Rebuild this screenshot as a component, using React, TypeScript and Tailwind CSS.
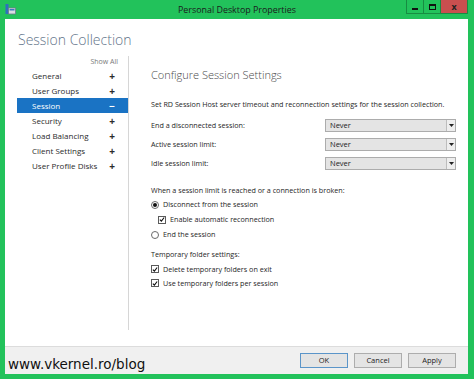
import React from 'react';

const navItems = ['General', 'User Groups', 'Session', 'Security', 'Load Balancing', 'Client Settings', 'User Profile Disks'];

const limits = ['End a disconnected session:', 'Active session limit:', 'Idle session limit:'];

const Check = () => (
  <span className="w-[8px] h-[8px] border border-[#5a5a5a] bg-white flex items-center justify-center shrink-0">
    <svg width="7" height="7" viewBox="0 0 7 7">
      <path d="M1 3.6 L2.8 5.4 L6 1.2" fill="none" stroke="#111" strokeWidth="1.3" />
    </svg>
  </span>
);

const Radio = ({ on }: { on?: boolean }) => (
  <span className="w-[8px] h-[8px] rounded-full border border-[#6a6a6a] bg-white flex items-center justify-center shrink-0">
    {on && <span className="w-[4px] h-[4px] rounded-full bg-[#111]" />}
  </span>
);

const Dropdown = () => (
  <div className="w-[131px] h-[13px] border border-[#acacac] bg-[#e4e4e4] flex">
    <span className="flex-1 pl-[4px] text-[7.5px] leading-[11px] text-[#222]">Never</span>
    <span className="w-[9px] border-l border-[#bdbdbd] bg-[#eeeeee] flex items-center justify-center">
      <svg width="5" height="3" viewBox="0 0 5 3">
        <path d="M0 0 L5 0 L2.5 3 Z" fill="#222" />
      </svg>
    </span>
  </div>
);

export default function App() {
  return (
    <div className="w-[474px] h-[379px] bg-[#22c25b] flex flex-col overflow-hidden" style={{ fontFamily: '"Open Sans", "Noto Sans", sans-serif' }}>
      {/* Title bar */}
      <div className="h-[19px] grid grid-cols-[1fr_auto_1fr] shrink-0">
        <div className="pl-[5px] pt-[4px]">
          <svg width="11" height="11" viewBox="0 0 11 11">
            <rect x="0.5" y="0" width="3" height="10" fill="#2f6fbf" />
            <rect x="3.5" y="4" width="7" height="6" fill="#d9dde3" stroke="#6b7b8c" strokeWidth="0.8" />
            <rect x="4.5" y="5" width="5" height="1.5" fill="#3a78c4" />
          </svg>
        </div>
        <div className="text-[8.9px] leading-[19px] text-[#1b1b1b]">Personal Desktop Properties</div>
        <div className="flex justify-end pr-[6px]">
          <div className="flex h-[14px] border border-t-0 border-[#178c42]">
            <div className="w-[17px] border-r border-[#178c42] flex items-end justify-center pb-[3px]">
              <span className="w-[6px] h-[2px] bg-[#111]" />
            </div>
            <div className="w-[17px] border-r border-[#178c42] flex items-center justify-center">
              <span className="w-[7px] h-[6px] border border-[#111] border-t-2" />
            </div>
            <div className="w-[26px] bg-[#c94f4f] flex items-center justify-center text-[9px] font-bold leading-none text-[#222]">x</div>
          </div>
        </div>
      </div>

      {/* Window body */}
      <div className="flex-1 ml-[5px] mr-[6px] bg-white flex flex-col">
        <div className="h-[37px] shrink-0 pl-[13px] pt-[11px] text-[14px] leading-[19px] font-light text-[#5f7389]">Session Collection</div>

        <div className="flex h-[274px]">
          {/* Navigation */}
          <div className="ml-[12px] w-[112px] border-r border-[#d6d6d6] text-[8px] text-[#2b2b2b]">
            <div className="h-[12px] pr-[10px] text-right text-[7px] leading-[12px] text-[#7a7a7a]">Show All</div>
            {navItems.map((item) => {
              const active = item === 'Session';
              return (
                <div
                  key={item}
                  className={`h-[15px] flex items-center justify-between pl-[15px] pr-[13px] ${active ? 'bg-[#1a73c4] text-white' : ''}`}
                >
                  <span>{item}</span>
                  <span className="text-[10px] font-bold leading-none">{active ? '−' : '+'}</span>
                </div>
              );
            })}
          </div>

          {/* Settings */}
          <div className="flex-1 pl-[22px] text-[7.2px] text-[#262626] whitespace-nowrap">
            <div className="mt-[11px] h-[16px] text-[11px] leading-[16px] font-light text-[#4a4a4a]">Configure Session Settings</div>
            <div className="mt-[15px] h-[12px] leading-[12px]">Set RD Session Host server timeout and reconnection settings for the session collection.</div>
            <div className="mt-[6px]">
              {limits.map((l) => (
                <div key={l} className="h-[19px] flex items-center">
                  <span className="w-[174px]">{l}</span>
                  <Dropdown />
                </div>
              ))}
            </div>
            <div className="mt-[11px] h-[12px] leading-[12px]">When a session limit is reached or a connection is broken:</div>
            <div className="mt-[1px] h-[15px] flex items-center gap-[4px]">
              <Radio on />
              <span>Disconnect from the session</span>
            </div>
            <div className="h-[15px] flex items-center gap-[4px] pl-[7px]">
              <Check />
              <span>Enable automatic reconnection</span>
            </div>
            <div className="h-[15px] flex items-center gap-[4px]">
              <Radio />
              <span>End the session</span>
            </div>
            <div className="mt-[6px] h-[12px] leading-[12px]">Temporary folder settings:</div>
            <div className="mt-[2px] h-[14px] flex items-center gap-[4px]">
              <Check />
              <span>Delete temporary folders on exit</span>
            </div>
            <div className="h-[14px] flex items-center gap-[4px]">
              <Check />
              <span>Use temporary folders per session</span>
            </div>
          </div>
        </div>

        <div className="flex-1" />

        {/* Bottom bar */}
        <div className="h-[28px] shrink-0 bg-[#f0f0f0] border-t border-[#dcdcdc] flex items-center justify-between pl-[3px] pr-[12px]">
          <span className="pt-[6px] text-[13.5px] leading-[16px] text-[#111]" style={{ fontFamily: '"DejaVu Sans", sans-serif' }}>
            www.vkernel.ro/blog
          </span>
          <div className="flex gap-[6px]">
            <button className="w-[48px] h-[15px] border border-[#5b95c9] bg-[#e4e4e4] text-[7.5px] leading-none text-[#222]">OK</button>
            <button className="w-[48px] h-[15px] border border-[#adadad] bg-[#e4e4e4] text-[7.5px] leading-none text-[#222]">Cancel</button>
            <button className="w-[48px] h-[15px] border border-[#adadad] bg-[#e4e4e4] text-[7.5px] leading-none text-[#222]">Apply</button>
          </div>
        </div>
      </div>
      <div className="h-[5px] shrink-0" />
    </div>
  );
}
